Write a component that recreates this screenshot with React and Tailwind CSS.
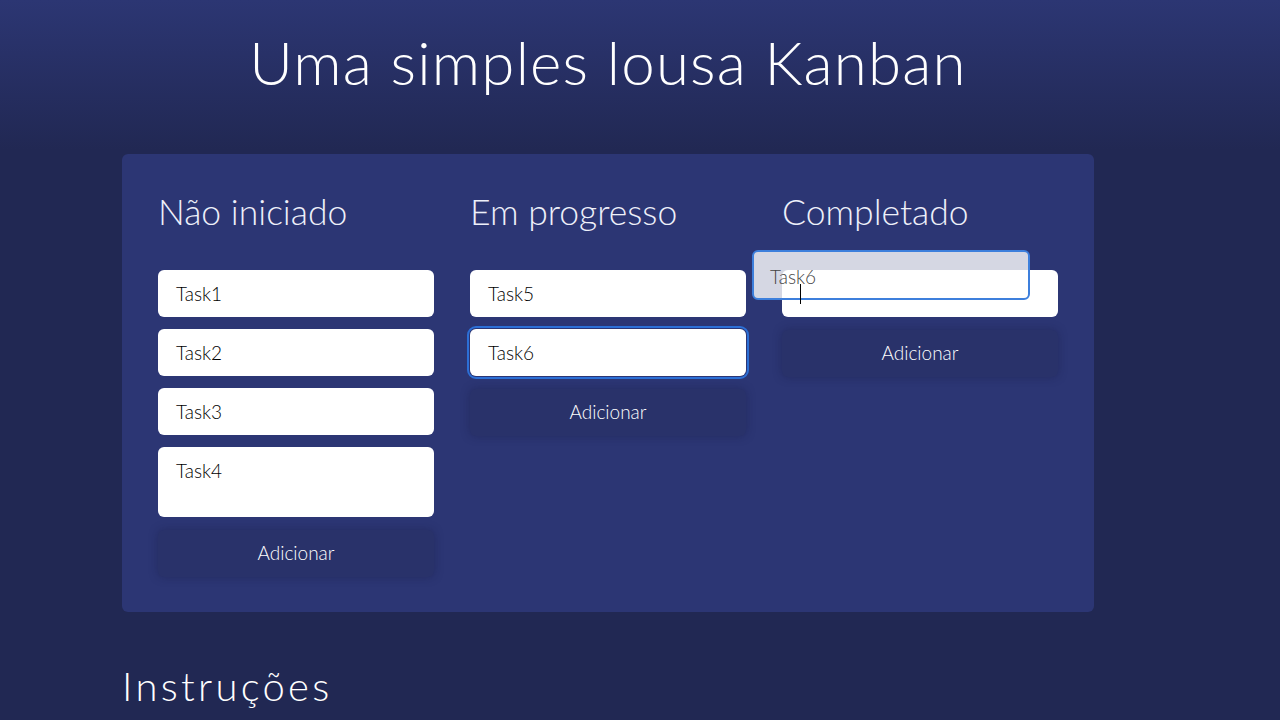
import React from "react";

const columns = [
  { title: "Não iniciado", tasks: ["Task1", "Task2", "Task3", "Task4"] },
  { title: "Em progresso", tasks: ["Task5", "Task6"] },
  { title: "Completado", tasks: [""] },
];

const Card = ({ text, tall, focused }) => (
  <div
    className={
      "rounded-md bg-white px-[18px] py-3 text-[19px] font-light leading-[23px] text-black " +
      (tall ? "h-[70px] " : "h-[47px] ") +
      (focused ? "outline-2 outline-offset-1 outline-[#2c6fd6]" : "")
    }
  >
    {text}
  </div>
);

const Column = ({ title, tasks, focusIndex }) => (
  <div className="flex flex-col">
    <h2 className="mb-[37px] text-[35.5px] font-light leading-[43px] text-[#eef0fa]">{title}</h2>
    <div className="flex flex-col gap-3">
      {tasks.map((t, i) => (
        <Card key={i} text={t} tall={t === "Task4"} focused={i === focusIndex} />
      ))}
      <button className="mt-px h-[47px] rounded-md bg-[#29326a] text-[19px] font-light text-white shadow-[0_0_10px_rgba(20,24,60,0.35)]">
        Adicionar
      </button>
    </div>
  </div>
);

export default function App() {
  return (
    <div className="relative min-h-screen bg-[#212853] bg-[linear-gradient(180deg,#2c3673_0px,#212853_150px)] font-['Lato','Open_Sans',sans-serif]">
      <div className="ml-[122px] w-[972px] pt-[26px]">
        <h1 className="text-center text-[60px] font-light leading-[1.2] tracking-[1.2px] text-white">
          Uma simples lousa Kanban
        </h1>
        <div className="mt-[56px] grid grid-cols-3 gap-9 rounded-md bg-[#2c3674] px-9 pb-[35px] pt-9">
          <Column {...columns[0]} />
          <Column {...columns[1]} focusIndex={1} />
          <Column {...columns[2]} />
        </div>
        <h2 className="mt-[50px] text-[40px] font-light leading-[1.2] tracking-[3.3px] text-white">
          Instruções
        </h2>
      </div>

      {/* drag ghost */}
      <div className="absolute left-[752px] top-[250px] h-[50px] w-[278px] rounded-md border-2 border-[#3d7fdc] bg-white/80 px-[16px] pt-[14px] text-[19px] font-light leading-[22px] text-[#444]">
        Task6
      </div>
      <div className="absolute left-[800px] top-[284px] h-[20px] w-px bg-black" />
    </div>
  );
}
